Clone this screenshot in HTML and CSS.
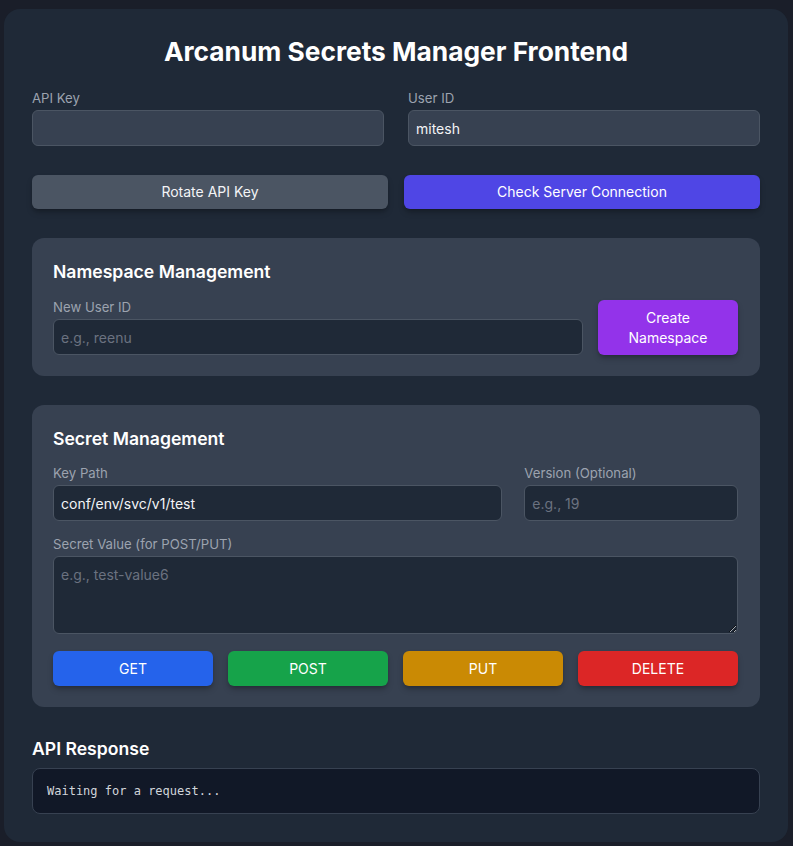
FILE: index.html
```html
<!DOCTYPE html>
<html lang="en">
<head>
<meta charset="utf-8">
<title>Arcanum Secrets Manager Frontend</title>
<link rel="stylesheet" href="styles.css">
</head>
<body>
<div class="card">
  <h1 class="title">Arcanum Secrets Manager Frontend</h1>

  <div class="grid-2 top-fields">
    <div class="field">
      <label class="label">API Key</label>
      <input class="input input-top" type="password" value="">
    </div>
    <div class="field">
      <label class="label">User ID</label>
      <input class="input input-top" type="text" value="mitesh">
    </div>
  </div>

  <div class="grid-2b top-actions">
    <button class="btn btn-gray">Rotate API Key</button>
    <button class="btn btn-indigo">Check Server Connection</button>
  </div>

  <section class="panel">
    <h2 class="panel-title">Namespace Management</h2>
    <div class="ns-row">
      <div class="field grow">
        <label class="label">New User ID</label>
        <input class="input input-inner" type="text" placeholder="e.g., reenu">
      </div>
      <button class="btn btn-purple btn-ns">Create Namespace</button>
    </div>
  </section>

  <section class="panel">
    <h2 class="panel-title panel-title-tight">Secret Management</h2>
    <div class="grid-3">
      <div class="field span-2">
        <label class="label">Key Path</label>
        <input class="input input-inner" type="text" value="conf/env/svc/v1/test">
      </div>
      <div class="field">
        <label class="label">Version (Optional)</label>
        <input class="input input-inner" type="text" placeholder="e.g., 19">
      </div>
    </div>
    <div class="field secret-field">
      <label class="label">Secret Value (for POST/PUT)</label>
      <textarea class="input input-inner textarea" rows="3" placeholder="e.g., test-value6"></textarea>
    </div>
    <div class="grid-4">
      <button class="btn btn-blue">GET</button>
      <button class="btn btn-green">POST</button>
      <button class="btn btn-yellow">PUT</button>
      <button class="btn btn-red">DELETE</button>
    </div>
  </section>

  <h2 class="panel-title response-title">API Response</h2>
  <pre class="response">Waiting for a request...</pre>
</div>
</body>
</html>
```

FILE: styles.css
```css
* { box-sizing: border-box; }

html, body {
  margin: 0;
  padding: 0;
}

body {
  background: #1a1e29;
  font-family: Inter, "Noto Sans", "Liberation Sans", sans-serif;
  color: #f3f4f6;
  padding: 9px 5px 4px 4px;
}

.card {
  background: #1f2937;
  border-radius: 16px;
  padding: 28px;
  width: 784px;
}

.title {
  margin: 0 0 22px;
  text-align: center;
  font-size: 26.3px;
  line-height: 30px;
  font-weight: 700;
  color: #ffffff;
}

.grid-2 {
  display: grid;
  grid-template-columns: 1fr 1fr;
  column-gap: 24px;
}

.grid-2b {
  display: grid;
  grid-template-columns: 1fr 1fr;
  column-gap: 16px;
}

.top-actions {
  margin-top: 29px;
}

.field {
  display: flex;
  flex-direction: column;
  min-width: 0;
}

.label {
  font-size: 13.2px;
  line-height: 18px;
  color: #9ca3af;
  margin-bottom: 3px;
}

.input {
  font-family: Inter, "Noto Sans", "Liberation Sans", sans-serif;
  font-size: 14px;
  font-weight: 400;
  color: #f3f4f6;
  height: 36px;
  padding: 0 7px;
  border: 1px solid #4b5563;
  border-radius: 6px;
  outline: none;
  width: 100%;
}

.input::placeholder {
  color: #6b7280;
}

.input-top {
  background: #374151;
}

.input-inner {
  background: #1f2937;
}

.textarea {
  height: 78px;
  padding-top: 8px;
  padding-bottom: 8px;
  line-height: 20px;
  resize: vertical;
  display: block;
}

.btn {
  font-family: Inter, "Noto Sans", "Liberation Sans", sans-serif;
  font-size: 14px;
  font-weight: 400;
  line-height: 20px;
  color: #ffffff;
  border: none;
  border-radius: 6px;
  height: 34px;
  padding: 0 16px;
  box-shadow: 0 4px 6px -1px rgba(0, 0, 0, 0.25), 0 2px 4px -2px rgba(0, 0, 0, 0.2);
  cursor: pointer;
}

.btn-gray { background: #4b5563; color: #f3f4f6; }
.btn-indigo { background: #4f46e5; }
.btn-purple { background: #9333ea; }
.btn-blue { background: #2563eb; }
.btn-green { background: #16a34a; }
.btn-yellow { background: #ca8a04; }
.btn-red { background: #dc2626; }

.panel {
  background: #374151;
  border-radius: 12px;
  padding: 21px 22px 21px 21px;
  margin-top: 29px;
}

.panel-title {
  margin: 0 0 14px;
  font-size: 17.6px;
  line-height: 25px;
  font-weight: 600;
  color: #ffffff;
}

.panel-title-tight {
  margin-bottom: 13px;
}

.ns-row {
  display: flex;
  align-items: flex-end;
  gap: 15px;
}

.grow { flex: 1 1 auto; }

.btn-ns {
  flex: none;
  width: 140px;
  height: 55px;
  padding: 0 20px;
}

.grid-3 {
  display: grid;
  grid-template-columns: 1fr 1fr 1fr;
  column-gap: 22px;
}

.span-2 { grid-column: span 2; }

.secret-field {
  margin-top: 14px;
}

.grid-4 {
  display: grid;
  grid-template-columns: repeat(4, 1fr);
  column-gap: 15px;
  margin-top: 17px;
}

.grid-4 .btn {
  height: 35px;
}

.response-title {
  margin-top: 29px;
  margin-bottom: 7px;
}

.response {
  margin: 0;
  background: #111827;
  border: 1px solid #374151;
  border-radius: 8px;
  padding: 13px 14px;
  font-family: "DejaVu Sans Mono", "Liberation Mono", monospace;
  font-size: 12px;
  line-height: 18px;
  color: #d1d5db;
  height: 46px;
}
```
